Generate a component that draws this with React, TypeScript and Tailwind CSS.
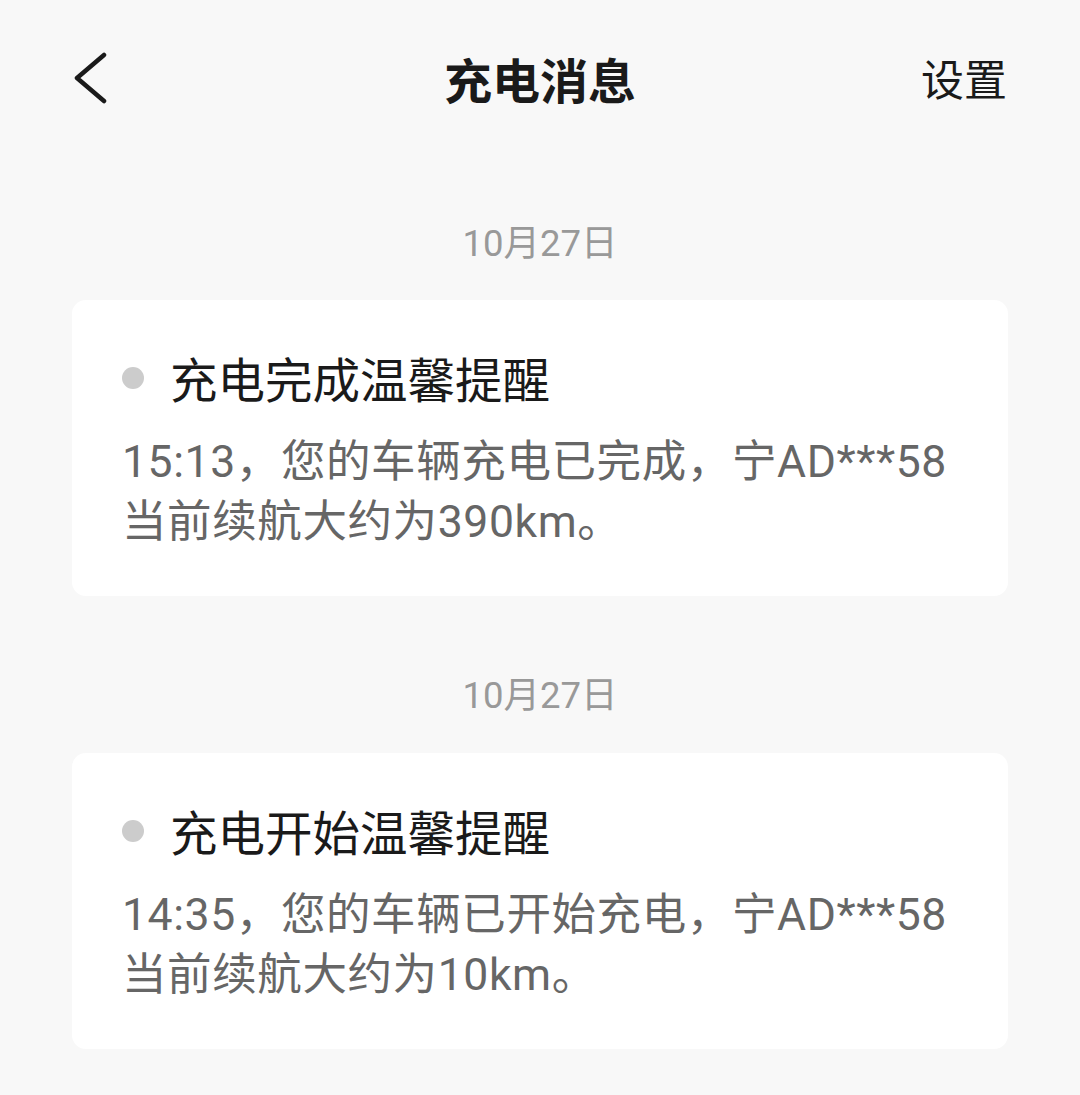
import React from "react";

const font = { fontFamily: '"Noto Sans CJK SC", "Noto Sans", sans-serif' };
const mixed = { fontFamily: 'Roboto, "Noto Sans CJK SC", sans-serif' };

function Card({ title, line1, line2 }: { title: string; line1: string; line2: string }) {
  return (
    <div className="mx-[72px] rounded-[14px] bg-white pl-[50px] pr-[40px] pt-[48px] pb-[44px]">
      <div className="flex items-center h-[60px]">
        <span className="w-[22px] h-[22px] rounded-full bg-[#cccccc] shrink-0" />
        <span className="ml-[26px] text-[47.5px] leading-[60px] text-[#1a1a1a]">{title}</span>
      </div>
      <div className="mt-[24px] text-[44.5px] leading-[60px] tracking-[0.6px] text-[#666666]" style={mixed}>
        <div>{line1}</div>
        <div>{line2}</div>
      </div>
    </div>
  );
}

export default function App() {
  return (
    <div className="w-[1080px] h-[1095px] bg-[#f8f8f8] overflow-hidden" style={font}>
      <div className="relative h-[156px] flex items-center justify-center">
        <svg className="absolute left-[72px] top-[52px]" width="36" height="52" viewBox="0 0 36 52" fill="none">
          <path d="M32 3 L5 26 L32 49" stroke="#1a1a1a" strokeWidth="4.5" strokeLinecap="round" strokeLinejoin="round" />
        </svg>
        <span className="text-[48px] font-bold text-[#1a1a1a] leading-none">充电消息</span>
        <span className="absolute right-[73px] top-[56px] text-[43px] leading-none text-[#1a1a1a]">设置</span>
      </div>
      <div className="h-[144px] pt-[32px] flex items-center justify-center text-[36.5px] text-[#999999]" style={mixed}>10月27日</div>
      <Card title="充电完成温馨提醒" line1="15:13，您的车辆充电已完成，宁AD***58" line2="当前续航大约为390km。" />
      <div className="h-[157px] pt-[44px] flex items-center justify-center text-[36.5px] text-[#999999]" style={mixed}>10月27日</div>
      <Card title="充电开始温馨提醒" line1="14:35，您的车辆已开始充电，宁AD***58" line2="当前续航大约为10km。" />
    </div>
  );
}
